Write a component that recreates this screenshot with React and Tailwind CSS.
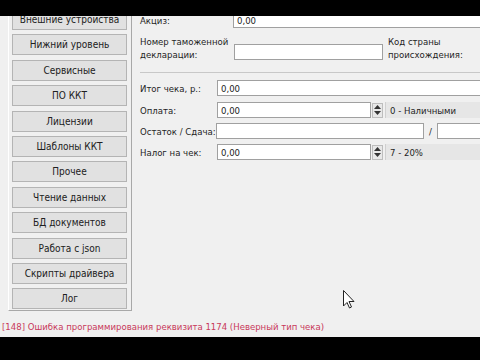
import React from 'react';

const buttons = [
  'Внешние устройства',
  'Нижний уровень',
  'Сервисные',
  'ПО ККТ',
  'Лицензии',
  'Шаблоны ККТ',
  'Прочее',
  'Чтение данных',
  'БД документов',
  'Работа с json',
  'Скрипты драйвера',
  'Лог',
];

function Spinner() {
  return (
    <div className="w-[11px] h-[15px] ml-[1px] border border-[#bdbdbd] bg-[#e8e8e8] flex flex-col items-center justify-center gap-[2px]">
      <svg width="7" height="4" viewBox="0 0 7 4"><path d="M0 4 L3.5 0 L7 4 Z" fill="#333" /></svg>
      <svg width="7" height="4" viewBox="0 0 7 4"><path d="M0 0 L3.5 4 L7 0 Z" fill="#333" /></svg>
    </div>
  );
}

function Input({ value, className = '' }) {
  return (
    <div className={'h-[16px] bg-white border border-[#a0a0a0] flex items-center pl-[3px] text-[#222] ' + className}>
      {value}
    </div>
  );
}

export default function App() {
  return (
    <div
      className="w-[480px] h-[360px] bg-black flex flex-col text-[9.5px] leading-[13px] text-[#1e1e1e]"
      style={{ fontFamily: '"DejaVu Sans Condensed", "Liberation Sans", Arial, sans-serif' }}
    >
      <div className="h-[16px] shrink-0 bg-black" />

      <div className="h-[321px] shrink-0 overflow-hidden bg-[#f0f0f0] relative">
        <div className="-mt-[16px] flex flex-col">
          {/* --- top area: menu + form --- */}
          <div className="flex h-[311px]">
            {/* left menu panel */}
            <div className="w-[132px] pl-[8px]">
              <div className="h-full border-l border-l-white border-r border-r-[#a8a8a8] border-b border-b-[#a8a8a8] pl-[3px] pt-[9px] flex flex-col gap-[4.4px]">
                {buttons.map((b) => (
                  <div
                    key={b}
                    className="w-[115px] h-[21px] shrink-0 bg-[#e1e1e1] border border-[#b4b4b4] flex items-center justify-center text-[10px] text-[#202020]"
                  >
                    {b}
                  </div>
                ))}
              </div>
            </div>

            {/* right form */}
            <div className="flex-1 pl-[8px] flex flex-col whitespace-nowrap">
              <div className="flex items-center h-[16px] mt-[12px]">
                <span className="w-[93px]">Акциз:</span>
                <Input value="0,00" className="flex-1 border-r-0" />
              </div>

              <div className="flex items-start mt-[7px]">
                <span className="w-[94px]">Номер таможенной<br />декларации:</span>
                <Input value="" className="w-[149px] mt-[9px]" />
                <span className="ml-[5px]">Код страны<br />происхождения:</span>
              </div>

              <div className="h-px bg-[#c8c8c8] mt-[11px]" />

              <div className="flex items-center h-[16px] mt-[7px]">
                <span className="w-[77px]">Итог чека, р.:</span>
                <Input value="0,00" className="flex-1 border-r-0" />
              </div>

              <div className="flex items-center h-[16px] mt-[6px]">
                <span className="w-[77px]">Оплата:</span>
                <Input value="0,00" className="w-[154px]" />
                <Spinner />
                <div className="flex-1 h-[16px] ml-[2px] bg-[#e6e6e6] border-l border-l-[#d0d0d0] flex items-center pl-[4px]">
                  0 - Наличными
                </div>
              </div>

              <div className="flex items-center h-[16px] mt-[5px]">
                <span className="w-[76px]">Остаток / Сдача:</span>
                <Input value="" className="w-[208px]" />
                <span className="w-[13px] text-center">/</span>
                <Input value="" className="flex-1 border-r-0" />
              </div>

              <div className="flex items-center h-[16px] mt-[5px]">
                <span className="w-[77px]">Налог на чек:</span>
                <Input value="0,00" className="w-[154px]" />
                <Spinner />
                <div className="flex-1 h-[16px] ml-[2px] bg-[#e6e6e6] border-l border-l-[#d0d0d0] flex items-center pl-[4px]">
                  7 - 20%
                </div>
              </div>
            </div>
          </div>

          {/* status line */}
          <div className="pl-[2px] mt-[9px] text-[#c8385a]">
            [148] Ошибка программирования реквизита 1174 (Неверный тип чека)
          </div>
        </div>

        {/* mouse cursor */}
        <svg className="absolute left-[343px] top-[274px]" width="12" height="19" viewBox="0 0 12 19">
          <path d="M0.5 0.5 L0.5 16 L4 12.5 L6.5 18 L8.5 17 L6 11.5 L11 11.5 Z" fill="white" stroke="#222" strokeWidth="1" />
        </svg>
      </div>

      <div className="flex-1 bg-black" />
    </div>
  );
}
